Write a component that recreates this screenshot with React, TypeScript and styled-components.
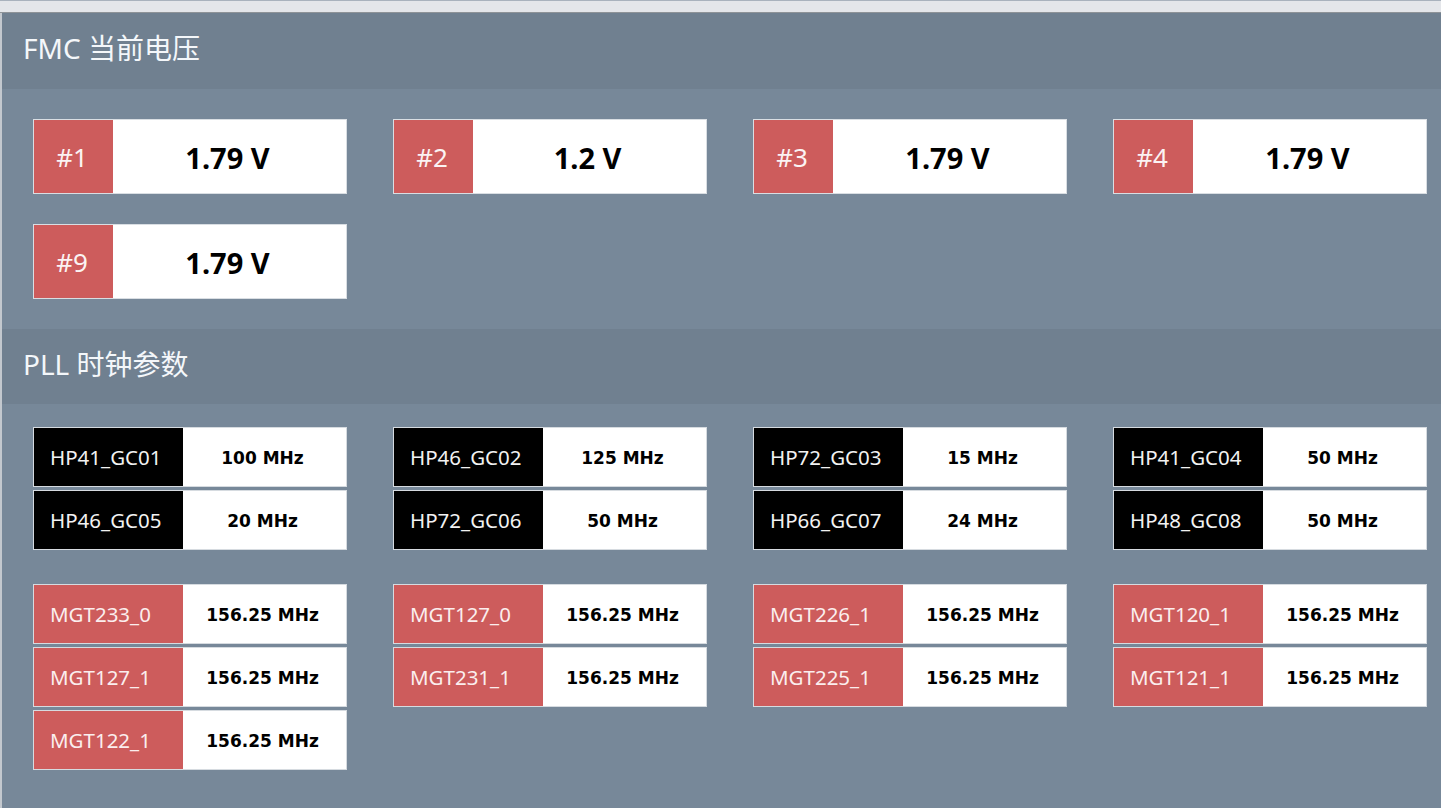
import React from "react";
import styled, { createGlobalStyle } from "styled-components";

const GlobalStyle = createGlobalStyle`
  html, body {
    margin: 0;
    padding: 0;
    background: #e4e6ea;
    font-family: "Noto Sans", "Noto Sans CJK SC", sans-serif;
  }
  * { box-sizing: border-box; }
`;

const Page = styled.div`
  display: flex;
  flex-direction: column;
  min-height: 808px;
`;

const TopBar = styled.div`
  height: 13px;
  background: #e4e6ea;
  border-top: 1px solid #a9b2bd;
  border-bottom: 1px solid #8e9398;
`;

const Panel = styled.div`
  flex: 1;
  background: #778899;
  border-left: 2px solid #c3c8ce;
  display: flex;
  flex-direction: column;
`;

const SectionHeader = styled.div<{ $h: number }>`
  height: ${(p) => p.$h}px;
  background: #708090;
  display: flex;
  align-items: center;
  padding: 0 0 8px 21px;
  color: #f4f7fa;
  font-family: "Noto Sans", "Noto Sans CJK SC", sans-serif;
  font-size: 28px;
`;

const SectionBody = styled.div<{ $pt: number; $pb: number }>`
  padding: ${(p) => p.$pt}px 31px ${(p) => p.$pb}px 31px;
  display: flex;
  flex-direction: column;
  gap: 34px;
`;

const Grid4 = styled.div<{ $rowGap: number }>`
  display: grid;
  grid-template-columns: repeat(4, 314px);
  column-gap: 46px;
  row-gap: ${(p) => p.$rowGap}px;
  align-items: start;
`;

const VoltCard = styled.div`
  height: 75px;
  display: grid;
  grid-template-columns: 79px 1fr;
  border: 1px solid rgba(119, 136, 153, 0.28);
  background: #ffffff;
`;

const VoltLabel = styled.div`
  background: #cd5c5c;
  color: #fbf3f3;
  font-size: 26px;
  display: flex;
  align-items: center;
  justify-content: center;
  padding-right: 3px;
`;

const VoltValue = styled.div`
  background: #ffffff;
  color: #000;
  font-weight: 700;
  font-size: 29px;
  display: flex;
  align-items: center;
  justify-content: center;
  padding: 2px 4px 0 0;
`;

const Stack = styled.div`
  display: flex;
  flex-direction: column;
  gap: 3px;
`;

const ClockCard = styled.div`
  height: 60px;
  display: grid;
  grid-template-columns: 149px 1fr;
  border: 1px solid rgba(119, 136, 153, 0.3);
  background: #ffffff;
`;

const ClockLabel = styled.div<{ $kind: "hp" | "mgt" }>`
  background: ${(p) => (p.$kind === "hp" ? "#000000" : "#cd5c5c")};
  color: ${(p) => (p.$kind === "hp" ? "#f2f2f2" : "#fbeeee")};
  font-size: 20.5px;
  display: flex;
  align-items: center;
  padding-left: 16px;
`;

const ClockValue = styled.div`
  color: #000;
  font-family: "DejaVu Sans", sans-serif;
  font-weight: 700;
  font-size: 17px;
  display: flex;
  align-items: center;
  justify-content: center;
  padding: 2px 4px 0 0;
`;

const volts = [
  ["#1", "1.79 V"],
  ["#2", "1.2 V"],
  ["#3", "1.79 V"],
  ["#4", "1.79 V"],
  ["#9", "1.79 V"],
];

const hp: [string, string][][] = [
  [["HP41_GC01", "100 MHz"], ["HP46_GC05", "20 MHz"]],
  [["HP46_GC02", "125 MHz"], ["HP72_GC06", "50 MHz"]],
  [["HP72_GC03", "15 MHz"], ["HP66_GC07", "24 MHz"]],
  [["HP41_GC04", "50 MHz"], ["HP48_GC08", "50 MHz"]],
];

const mgt: [string, string][][] = [
  [["MGT233_0", "156.25 MHz"], ["MGT127_1", "156.25 MHz"], ["MGT122_1", "156.25 MHz"]],
  [["MGT127_0", "156.25 MHz"], ["MGT231_1", "156.25 MHz"]],
  [["MGT226_1", "156.25 MHz"], ["MGT225_1", "156.25 MHz"]],
  [["MGT120_1", "156.25 MHz"], ["MGT121_1", "156.25 MHz"]],
];

function ClockGroup({ items, kind }: { items: [string, string][]; kind: "hp" | "mgt" }) {
  return (
    <Stack>
      {items.map(([l, v]) => (
        <ClockCard key={l}>
          <ClockLabel $kind={kind}>{l}</ClockLabel>
          <ClockValue>{v}</ClockValue>
        </ClockCard>
      ))}
    </Stack>
  );
}

export default function App() {
  return (
    <Page>
      <GlobalStyle />
      <TopBar />
      <Panel>
        <SectionHeader $h={76}>FMC 当前电压</SectionHeader>
        <SectionBody $pt={30} $pb={30}>
          <Grid4 $rowGap={30}>
            {volts.map(([l, v]) => (
              <VoltCard key={l}>
                <VoltLabel>{l}</VoltLabel>
                <VoltValue>{v}</VoltValue>
              </VoltCard>
            ))}
          </Grid4>
        </SectionBody>
        <SectionHeader $h={75}>PLL 时钟参数</SectionHeader>
        <SectionBody $pt={23} $pb={30}>
          <Grid4 $rowGap={0}>
            {hp.map((g, i) => (
              <ClockGroup key={i} items={g} kind="hp" />
            ))}
          </Grid4>
          <Grid4 $rowGap={0}>
            {mgt.map((g, i) => (
              <ClockGroup key={i} items={g} kind="mgt" />
            ))}
          </Grid4>
        </SectionBody>
      </Panel>
    </Page>
  );
}
